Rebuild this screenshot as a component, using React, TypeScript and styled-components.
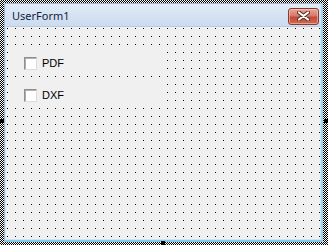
import React from 'react'
import styled, { createGlobalStyle } from 'styled-components'

const Global = createGlobalStyle`
  html, body {
    margin: 0;
    padding: 0;
    background: #fff;
  }
`

const options = ['PDF', 'DXF']

const App = () => {
  return (
    <>
      <Global />
      <Hatch>
        <Handle side="left" />
        <Handle side="right" />
        <Handle side="bottom" />
        <Frame>
          <TitleBar>
            <Title>UserForm1</Title>
            <CloseButton>
              <svg width="13" height="10" viewBox="0 0 13 10">
                <path
                  d="M2 1.5 L11 8.5 M11 1.5 L2 8.5"
                  stroke="#5a2a24"
                  strokeWidth="4"
                  strokeLinecap="round"
                />
                <path
                  d="M2 1.5 L11 8.5 M11 1.5 L2 8.5"
                  stroke="#fff"
                  strokeWidth="2.2"
                  strokeLinecap="round"
                />
              </svg>
            </CloseButton>
          </TitleBar>
          <Client>
            {options.map((label) => (
              <CheckControl key={label}>
                <Box />
                <Label>{label}</Label>
              </CheckControl>
            ))}
          </Client>
        </Frame>
      </Hatch>
    </>
  )
}

export default App

const Hatch = styled.div`
  position: relative;
  box-sizing: border-box;
  width: 328px;
  height: 245px;
  padding: 3px 5px 3px 4px;
  background: repeating-conic-gradient(#000 0 25%, #fff 0 50%) 0 0 / 2px 2px;
`

const Handle = styled.div<{ side: 'left' | 'right' | 'bottom' }>`
  position: absolute;
  width: 4px;
  height: 4px;
  background: #000;
  ${({ side }) =>
    side === 'left'
      ? 'left: 0; top: 119px;'
      : side === 'right'
      ? 'right: 0; top: 119px;'
      : 'bottom: 0; left: 161px;'}
`

const Frame = styled.div`
  box-sizing: border-box;
  width: 319px;
  height: 239px;
  display: flex;
  flex-direction: column;
  background: #d3e2f3;
  border: 1px solid #9fb7d3;
  border-bottom: 2px solid #7fcbea;
  border-right: 2px solid #9cd6ee;
  padding: 0 1px 1px 1px;
`

const TitleBar = styled.div`
  height: 22px;
  flex-shrink: 0;
  display: flex;
  align-items: center;
  justify-content: space-between;
  padding: 0 1px 0 6px;
  background: linear-gradient(#e1eaf6, #cbdbef);
`

const Title = styled.span`
  font-family: 'Noto Sans', sans-serif;
  font-size: 11px;
  color: #10233d;
  margin-top: 1px;
`

const CloseButton = styled.div`
  box-sizing: border-box;
  width: 31px;
  height: 17px;
  display: flex;
  align-items: center;
  justify-content: center;
  border: 1px solid #8a3a31;
  border-radius: 3px;
  background: linear-gradient(#e8a598 0%, #d67a68 45%, #c24a36 55%, #cf6a52 100%);
  box-shadow: inset 0 0 0 1px rgba(255, 220, 210, 0.5);
  margin-top: 2px;
`

const Client = styled.div`
  flex: 1;
  display: flex;
  flex-direction: column;
  gap: 7px;
  padding: 22px 0 0 5px;
  border-top: 1px solid #b9cbe2;
  background-image: linear-gradient(to right, #000 1px, #f0f0f0 1px),
    linear-gradient(to bottom, #000 1px, #f0f0f0 1px);
  background-blend-mode: lighten;
  background-size: 8px 8px;
  background-position: 1px 1px;
`

const CheckControl = styled.div`
  width: 153px;
  height: 25px;
  display: flex;
  align-items: center;
  gap: 5px;
  padding: 3px 0 0 13px;
  box-sizing: border-box;
  background: #f0f0f0;
`

const Box = styled.div`
  box-sizing: border-box;
  width: 13px;
  height: 13px;
  background: #fff;
  border: 1px solid;
  border-color: #8e8f8f #dcdcdc #dcdcdc #8e8f8f;
  box-shadow: inset 1px 1px 0 #b0b0b0;
`

const Label = styled.span`
  font-family: 'Liberation Sans', Arial, sans-serif;
  font-size: 11px;
  color: #000;
`
